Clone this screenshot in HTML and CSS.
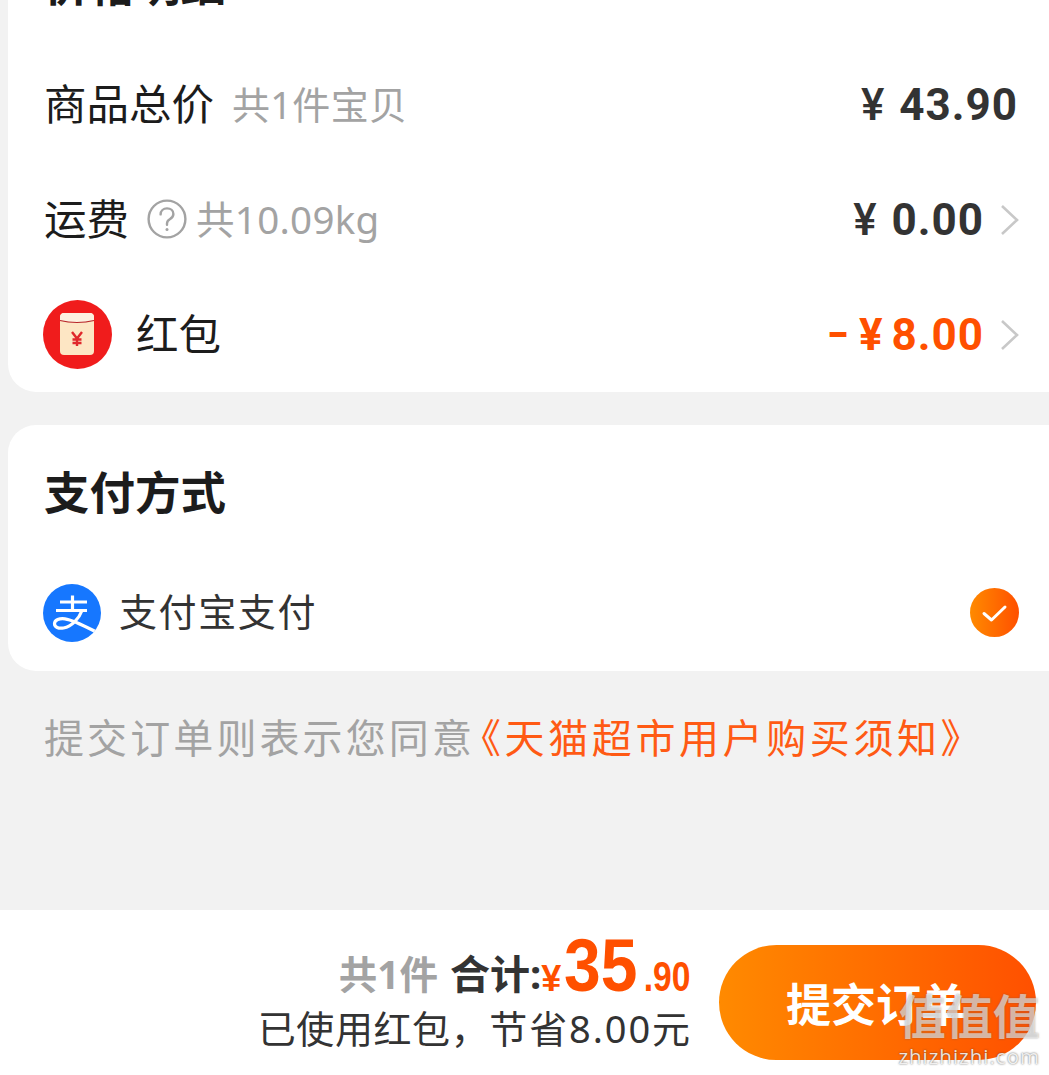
FILE: index.html
```html
<!DOCTYPE html>
<html lang="zh-CN">
<head>
    <meta charset="UTF-8">
    <meta name="viewport" content="width=device-width, initial-scale=1.0">
    <title>确认订单</title>
    <link rel="stylesheet" href="styles.css">
</head>
<body>

    <div class="page">
        <div class="card price-card">
            <h2 class="card-title">价格明细</h2>

            <div class="row">
                <span class="row-label">商品总价</span>
                <span class="row-note note-goods">共1件宝贝</span>
                <span class="amount amount-goods"><span class="yen">¥</span>43.90</span>
            </div>

            <div class="row">
                <span class="row-label">运费</span>
                <svg class="help-icon" viewBox="0 0 40 40" fill="none" stroke="#a3a3a3" stroke-width="2.4">
                    <circle cx="20" cy="20" r="18.4"/>
                    <path d="M13.6 15.4c0-3.6 2.8-6 6.4-6s6.4 2.400 6.400 5.600c0 2.600-1.600 4-3.600 5.200-1.900 1.100-2.800 2.200-2.800 4.400v1.200" stroke-linecap="round"/>
                    <circle cx="20" cy="30.6" r="1.5" fill="#a3a3a3" stroke="none"/>
                </svg>
                <span class="row-note">共10.09kg</span>
                <span class="amount"><span class="yen">¥</span>0.00</span>
                <svg class="chevron" viewBox="0 0 20 32" fill="none" stroke="#c8c8c8" stroke-width="2.6">
                    <path d="M2 2l15 14L2 30"/>
                </svg>
            </div>

            <div class="row">
                <svg class="packet-icon" viewBox="0 0 69 69">
                    <circle cx="34.5" cy="34.5" r="34.5" fill="#f01c1c"/>
                    <rect x="17" y="13" width="34" height="42" rx="4" fill="#fde6c4"/>
                    <path d="M17 17c0-2.200 1.800-4 4-4h26c2.200 0 4 1.800 4 4v3.500c-10 2.500-24 2.500-34 0z" fill="#fdf1e0"/>
                    <path d="M17 20.500c10 2.500 24 2.500 34 0" fill="none" stroke="#b8262a" stroke-width="1.200"/>
                    <path d="M29 32l5 6.500 5-6.500M34 38.500V46M29.500 39.500h9M29.500 43h9" fill="none" stroke="#e0282c" stroke-width="2.400"/>
                </svg>
                <span class="row-label packet-label">红包</span>
                <span class="amount amount-off"><span class="minus">–</span><span class="yen">¥</span>8.00</span>
                <svg class="chevron" viewBox="0 0 20 32" fill="none" stroke="#c8c8c8" stroke-width="2.6">
                    <path d="M2 2l15 14L2 30"/>
                </svg>
            </div>
        </div>

        <div class="card pay-card">
            <h2 class="card-title">支付方式</h2>

            <div class="row pay-row">
                <svg class="alipay-icon" viewBox="0 0 58 58">
                    <defs>
                        <clipPath id="alipayClip"><circle cx="29" cy="29" r="29"/></clipPath>
                    </defs>
                    <circle cx="29" cy="29" r="29" fill="#1677ff"/>
                    <g clip-path="url(#alipayClip)" fill="none" stroke="#fff" stroke-width="3.200">
                        <path d="M17 18h27M29.500 11.500V26M13 26.500h31"/>
                        <path d="M39 26.500c-3 8-10 16-18.500 17.500-5 .8-9-.8-9-4.200 0-3.800 5-5.800 10.500-5 10 1.500 23 9.200 38 16.500"/>
                    </g>
                </svg>
                <span class="pay-name">支付宝支付</span>
                <svg class="check-icon" viewBox="0 0 49 49">
                    <defs>
                        <linearGradient id="checkFill" x1="0" y1="0" x2="1" y2="0">
                            <stop offset="0" stop-color="#ff8a00"/>
                            <stop offset="1" stop-color="#ff5000"/>
                        </linearGradient>
                    </defs>
                    <circle cx="24.500" cy="24.500" r="24.500" fill="url(#checkFill)"/>
                    <path d="M14 25.500l7.500 6.500L35 19" fill="none" stroke="#fff" stroke-width="3" stroke-linecap="round" stroke-linejoin="round"/>
                </svg>
            </div>
        </div>

        <p class="agreement">提交订单则表示您同意<span class="agreement-link">《天猫超市用户购买须知》</span></p>

        <div class="submit-bar">
            <div class="summary">
                <div class="summary-total">
                    <span class="total-count">共1件</span>
                    <span class="total-label">合计:</span><span class="total-price"><span class="total-yen">¥</span><span class="total-int">35</span><span class="total-dec">.90</span></span>
                </div>
                <div class="summary-saved"><span class="saved-head">已使用红包，</span><span class="saved-tail">节省8.00元</span></div>
            </div>
            <button class="submit-button">提交订单</button>
        </div>

        <div class="watermark">
            <div class="watermark-mark">值值值</div>
            <div class="watermark-site">zhizhizhi.com</div>
        </div>
    </div>

</body>
</html>
```

FILE: styles.css
```css
/* General Styles */
html, body {
    margin: 0;
    padding: 0;
}

body {
    font-family: "Noto Sans", "Noto Sans CJK SC", sans-serif;
    background-color: #f2f2f2;
    color: #1c1c1c;
}

.page {
    position: relative;
    display: flex;
    flex-direction: column;
    height: 1075px;
    overflow: hidden;
}

/* Cards */
.card {
    background-color: #fff;
    border-radius: 28px;
    margin-left: 8px;
    margin-right: -40px;
    padding-left: 36px;
    padding-right: 69px;
}

.price-card {
    margin-top: -83px;
}

.pay-card {
    margin-top: 33px;
}

.card-title {
    margin: 0;
    padding: 37px 0 33px;
    font-size: 45.5px;
    line-height: 60px;
    font-weight: 700;
    color: #1c1c1c;
}

/* Rows */
.row {
    display: flex;
    align-items: center;
    height: 115px;
}

.row-label {
    font-size: 42.5px;
    color: #1c1c1c;
    margin-bottom: 6px;
}

.row-note {
    font-size: 38.5px;
    letter-spacing: 0.3px;
    color: #a3a3a3;
    margin-bottom: 6px;
}

.note-goods {
    margin-left: 18px;
    margin-bottom: 4px;
    font-size: 38px;
}

.help-icon {
    width: 40px;
    height: 40px;
    margin: 0 9px 2px 18px;
}

.amount {
    margin-left: auto;
    font-family: Roboto, "Noto Sans CJK SC", sans-serif;
    font-size: 44px;
    font-weight: 700;
    letter-spacing: 1px;
    color: #333;
}

.amount-goods {
    margin-right: 2px;
}

.yen {
    margin-right: 14px;
    font-weight: 500;
}

.amount-off {
    color: #ff5000;
}

.amount-off .yen {
    margin-right: 8px;
    font-weight: 700;
}

.minus {
    display: inline-block;
    margin-right: 10px;
    transform: scaleX(0.75);
    transform-origin: right center;
}

.chevron {
    width: 20px;
    height: 32px;
    margin-left: 16px;
}

.packet-icon {
    width: 69px;
    height: 69px;
    margin-left: -1px;
}

.packet-label {
    margin-left: 24px;
}

/* Payment */
.pay-row {
    height: 116px;
}

.alipay-icon {
    width: 58px;
    height: 58px;
    margin-left: -1px;
}

.pay-name {
    margin-left: 18px;
    margin-bottom: 8px;
    font-size: 38px;
    letter-spacing: 1.6px;
    color: #333;
}

.check-icon {
    width: 49px;
    height: 49px;
    margin-left: auto;
    margin-right: 1px;
    margin-bottom: 2px;
}

.agreement {
    margin: 34px 0 0 44px;
    font-size: 40px;
    line-height: 66px;
    letter-spacing: 3.1px;
    color: #a3a3a3;
    white-space: nowrap;
}

.agreement-link {
    color: #ff5a14;
    margin-left: -14px;
    letter-spacing: 3.6px;
}

/* Bottom Bar */
.submit-bar {
    margin-top: auto;
    height: 165px;
    box-sizing: border-box;
    background-color: #fff;
    display: flex;
    justify-content: flex-end;
    align-items: flex-start;
    gap: 29px;
    padding: 35px 13px 0 0;
}

.summary {
    display: flex;
    flex-direction: column;
    align-items: flex-end;
    margin-top: -2px;
}

.summary-total {
    display: flex;
    align-items: baseline;
    height: 54px;
    font-size: 40px;
    font-weight: 700;
}

.total-count {
    color: #a3a3a3;
    font-size: 38.5px;
    margin-right: 12px;
}

.total-label {
    color: #333;
}

/* price digits are a condensed face, squeezed from the right edge */
.total-price {
    display: flex;
    align-items: baseline;
    color: #ff5000;
    font-family: "Liberation Sans", sans-serif;
    font-weight: 700;
    transform: translateY(2px);
}

.total-yen {
    font-size: 36px;
}

.total-int {
    display: inline-block;
    font-size: 75px;
    line-height: 40px;
    margin-left: -9px;
    transform: translateX(2px) scaleX(0.88);
    transform-origin: right bottom;
}

.total-dec {
    display: inline-block;
    font-size: 42px;
    margin-left: -4px;
    transform: scaleX(0.8);
    transform-origin: right bottom;
}

.summary-saved {
    font-size: 38px;
    line-height: 58px;
    color: #333;
    margin-top: 2px;
    margin-right: -2px;
}

.saved-head {
    letter-spacing: 0.6px;
}

.saved-tail {
    letter-spacing: 1.9px;
}

.submit-button {
    width: 317px;
    height: 115px;
    border: none;
    border-radius: 58px;
    padding: 0 0 0 67px;
    text-align: left;
    font-family: inherit;
    font-size: 45px;
    font-weight: 700;
    color: #fff;
    background: linear-gradient(90deg, #ff8a00, #ff5000);
}

/* Site watermark over the button */
.watermark {
    position: absolute;
    right: 9px;
    bottom: 7px;
    text-align: center;
    color: rgba(255, 255, 255, 0.58);
    text-shadow: 0 0 2px rgba(90, 90, 90, 0.6);
}

.watermark-mark {
    font-size: 47px;
    line-height: 56px;
    font-weight: 700;
}

.watermark-site {
    font-family: "Open Sans", sans-serif;
    font-size: 20.500px;
    line-height: 24px;
    letter-spacing: 1px;
    color: rgba(255, 255, 255, 0.85);
    text-shadow: 0 0 2px rgba(60, 60, 60, 0.85);
}
```
